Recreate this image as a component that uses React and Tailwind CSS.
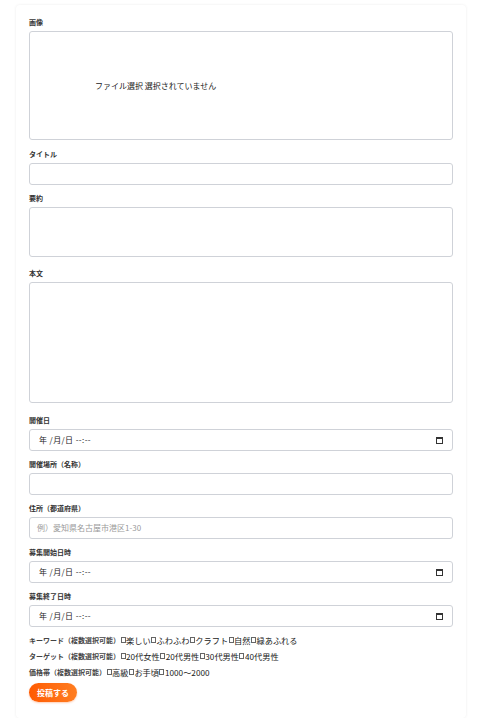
import React from 'react'

const FONT = { fontFamily: '"Noto Sans CJK JP", "Noto Sans", sans-serif' }

function Label({ children }) {
  return (
    <div className="text-[7px] leading-[10px] font-bold text-[#333] mb-[4px]">{children}</div>
  )
}

function Box({ className = '', children }) {
  return (
    <div className={'w-full border border-[#cfd2d8] rounded-[3px] bg-white ' + className}>
      {children}
    </div>
  )
}

function CalendarIcon() {
  return (
    <svg width="7" height="7" viewBox="0 0 7 7" className="shrink-0">
      <rect x="0.5" y="0.5" width="6" height="6" fill="none" stroke="#333" strokeWidth="1" />
      <rect x="0" y="0" width="7" height="2" fill="#333" />
    </svg>
  )
}

function DateField() {
  return (
    <Box className="h-[22px] flex items-center justify-between pl-[9px] pr-[9px]">
      <span className="text-[8px] text-[#222] tracking-[0.4px]">年 /月/日 --:--</span>
      <CalendarIcon />
    </Box>
  )
}

function Check() {
  return <span className="inline-block w-[5px] h-[6px] border border-[#666] mx-[0.5px] align-[-0.5px]" />
}

function CheckRow({ label, options }) {
  return (
    <div className="flex items-center h-[16px] whitespace-nowrap">
      <span className="text-[7px] font-bold text-[#444]">{label}</span>
      <span className="text-[8.2px] text-[#222] flex items-center">
        {options.map(o => (
          <span key={o} className="flex items-center">
            <Check />
            {o}
          </span>
        ))}
      </span>
    </div>
  )
}

export default function App() {
  return (
    <div className="min-h-screen bg-white px-[16px] pt-[5px]" style={FONT}>
      <div className="w-[450px] bg-white rounded-[4px] shadow-[0_0_3px_rgba(0,0,0,0.08)] px-[13px] pt-[12px] pb-[16px]">

        {/* 画像 */}
        <Label>画像</Label>
        <Box className="h-[109px] flex items-center pl-[65px]">
          <span className="text-[8px] text-[#222]">ファイル選択 選択されていません</span>
        </Box>

        <div className="mt-[9px]">
          <Label>タイトル</Label>
          <Box className="h-[22px]" />
        </div>

        <div className="mt-[8px]">
          <Label>要約</Label>
          <Box className="h-[50px]" />
        </div>

        <div className="mt-[11px]">
          <Label>本文</Label>
          <Box className="h-[121px]" />
        </div>

        <div className="mt-[12px]">
          <Label>開催日</Label>
          <DateField />
        </div>

        <div className="mt-[8px]">
          <Label>開催場所（名称）</Label>
          <Box className="h-[22px]" />
        </div>

        <div className="mt-[8px]">
          <Label>住所（都道府県）</Label>
          <Box className="h-[22px] flex items-center pl-[7px]">
            <span className="text-[8px] text-[#9a9a9a]">例）愛知県名古屋市港区1-30</span>
          </Box>
        </div>

        <div className="mt-[8px]">
          <Label>募集開始日時</Label>
          <DateField />
        </div>

        <div className="mt-[8px]">
          <Label>募集終了日時</Label>
          <DateField />
        </div>

        <div className="mt-[5px]">
          <CheckRow label="キーワード（複数選択可能）" options={['楽しい', 'ふわふわ', 'クラフト', '自然', '緑あふれる']} />
          <CheckRow label="ターゲット（複数選択可能）" options={['20代女性', '20代男性', '30代男性', '40代男性']} />
          <CheckRow label="価格帯（複数選択可能）" options={['高級', 'お手頃', '1000〜2000']} />
        </div>

        <button className="block mt-[3px] w-[48px] h-[19px] rounded-full bg-gradient-to-r from-[#ff5a00] to-[#ff7d1f] text-white text-[8px] font-bold shadow-[0_1px_2px_rgba(255,90,0,0.3)]">
          投稿する
        </button>
      </div>
    </div>
  )
}
